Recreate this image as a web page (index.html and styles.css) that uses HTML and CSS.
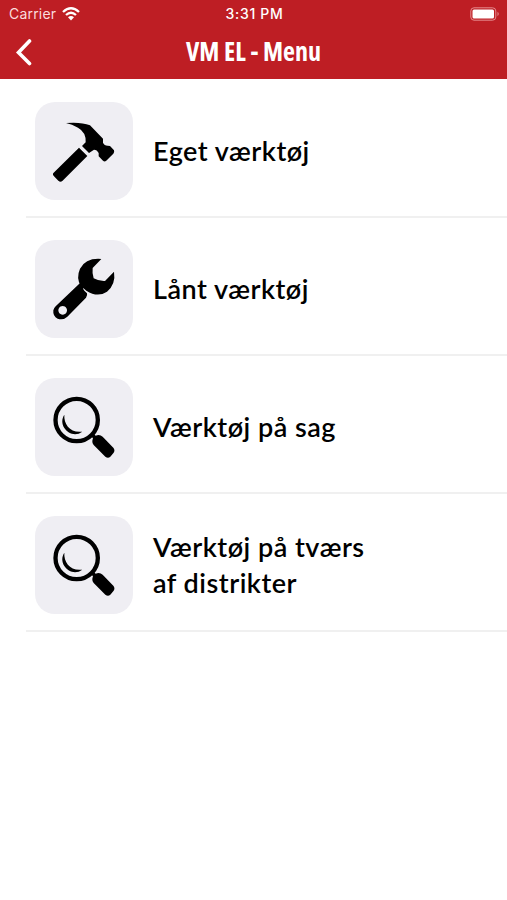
FILE: index.html
```
<!DOCTYPE html>
<html lang="da">
  <head>
    <meta charset="utf-8">
    <title>VM EL - Menu</title>
    <link rel="stylesheet" href="styles.css">
  </head>
  <body>
    <svg class="defs">
      <symbol id="search" viewBox="31 21 294 294">
        <circle cx="156" cy="147" r="63.5" fill="none" stroke="#000" stroke-width="13"/>
        <path d="M119 131 C117 160 137 187 173 182 C154 196 130 189 119 171 C111 158 111 143 119 131Z"/>
        <path d="M197 193 L205 186 L213 194 Q225 189 234 197 L266 230 Q272 238 267 245 L257 257 Q250 263 242 257 L207 222 Q200 214 205 202Z"/>
      </symbol>
    </svg>
    <header>
      <div class="status">
        <div class="carrier">
          <span>Carrier</span>
          <svg class="wifi" viewBox="0 0 18 14">
            <path d="M1 5 Q9 -2.5 17 5M4 8 Q9 3.5 14 8" fill="none" stroke="#fff" stroke-width="2.3"/>
            <path d="M6 10.2 Q9 7.8 12 10.2 L9 13.4Z" fill="#fff"/>
          </svg>
        </div>
        <span class="time">3:31 PM</span>
        <svg class="battery" viewBox="0 0 30 14">
          <rect x=".8" y=".8" width="25" height="12.4" rx="3.2" fill="none" stroke="#e58a8d" stroke-width="1"/>
          <rect x="2.5" y="2.5" width="21.5" height="9" rx="1.5" fill="#fff"/>
          <path d="M27.5 4.8 Q30 7 27.5 9.2Z" fill="#e58a8d"/>
        </svg>
      </div>
      <div class="nav">
        <svg class="back" viewBox="0 0 18 28">
          <path d="M14.5 3 L3.5 14.5 L14.5 25.5" fill="none" stroke="#fff" stroke-width="3.6" stroke-linecap="round"/>
        </svg>
        <h1>VM EL - Menu</h1>
      </div>
    </header>
    <ul class="menu">
      <li>
        <svg class="icon" viewBox="31 21 294 294">
          <path d="M124 84 Q169 80 196 91 L235 131 L235 143 Q239 152 249 152 L256 153 L268 166 Q270 171 266 176 L244 198 Q239 201 235 197 L222 184 Q222 179 222 174 Q217 164 208 164 L193 174 L172 153 L183 142 Q185 112 160 98 Q142 88 124 84Z"/>
          <path d="M163 158 L188 183 L113 258 Q107 263 101 257 L88 244 Q82 237 87 233Z"/>
        </svg>
        <span class="label">Eget værktøj</span>
      </li>
      <li>
        <svg class="icon" viewBox="31 21 294 294">
          <path d="M230 78 L204 105 Q202 121 207 136 Q223 145 241 144 L268 116 Q274 153 247 176 Q219 195 185 173 L168 158 Q154 134 166 107 Q184 74 230 78Z"/>
          <path fill-rule="evenodd" d="M167 149 L176 160 Q174 168 179 173 L187 181 Q189 188 184 194 L128 251 Q115 263 99 257 Q84 250 86 232 Q87 226 93 220Z M114 219 A13 13 0 1 0 114.1 219Z"/>
        </svg>
        <span class="label">Lånt værktøj</span>
      </li>
      <li>
        <svg class="icon"><use href="#search"/></svg>
        <span class="label">Værktøj på sag</span>
      </li>
      <li>
        <svg class="icon"><use href="#search"/></svg>
        <span class="label">Værktøj på tværs<br>af distrikter</span>
      </li>
    </ul>
  </body>
</html>
```
FILE: styles.css
```
body {
  margin: 0;
  background: #fff;
  font-family: Lato, sans-serif;
}
.defs {
  display: none;
}
header {
  height: 79px;
  background: #be1e24;
  color: #fff;
}
.status {
  display: grid;
  grid-template-columns: 1fr auto 1fr;
  align-items: center;
  height: 27px;
  padding: 0 7px 0 9px;
  font-family: Inter, sans-serif;
  font-size: 14px;
}
.carrier {
  display: flex;
  align-items: center;
  gap: 6px;
  color: #fbdcdd;
  letter-spacing: 0.2px;
}
.wifi {
  width: 18px;
  height: 14px;
}
.time {
  font-size: 14px;
  font-weight: 500;
  letter-spacing: 0.7px;
}
.battery {
  justify-self: end;
  width: 30px;
  height: 14px;
}
.nav {
  display: grid;
  grid-template-columns: 1fr auto 1fr;
  align-items: center;
  height: 50px;
}
.back {
  width: 18px;
  height: 28px;
  margin-left: 15px;
}
h1 {
  margin: 0;
  font-family: "Open Sans", sans-serif;
  font-size: 26px;
  font-weight: 700;
  font-stretch: 75%;
  line-height: 46px;
  padding-bottom: 3px;
  white-space: nowrap;
}
.menu {
  margin: 0;
  padding: 1px 0 0 26px;
  list-style: none;
}
.menu li {
  display: flex;
  align-items: center;
  gap: 20px;
  height: 98px;
  padding: 22px 0 16px 9px;
  border-bottom: 2px solid #f0f0f0;
}
.icon {
  flex: none;
  width: 98px;
  height: 98px;
  border-radius: 20px;
  background: #efeef3;
}
.label {
  font-size: 27px;
  font-weight: 600;
  line-height: 36px;
  letter-spacing: 0.5px;
  color: #000;
}
```
